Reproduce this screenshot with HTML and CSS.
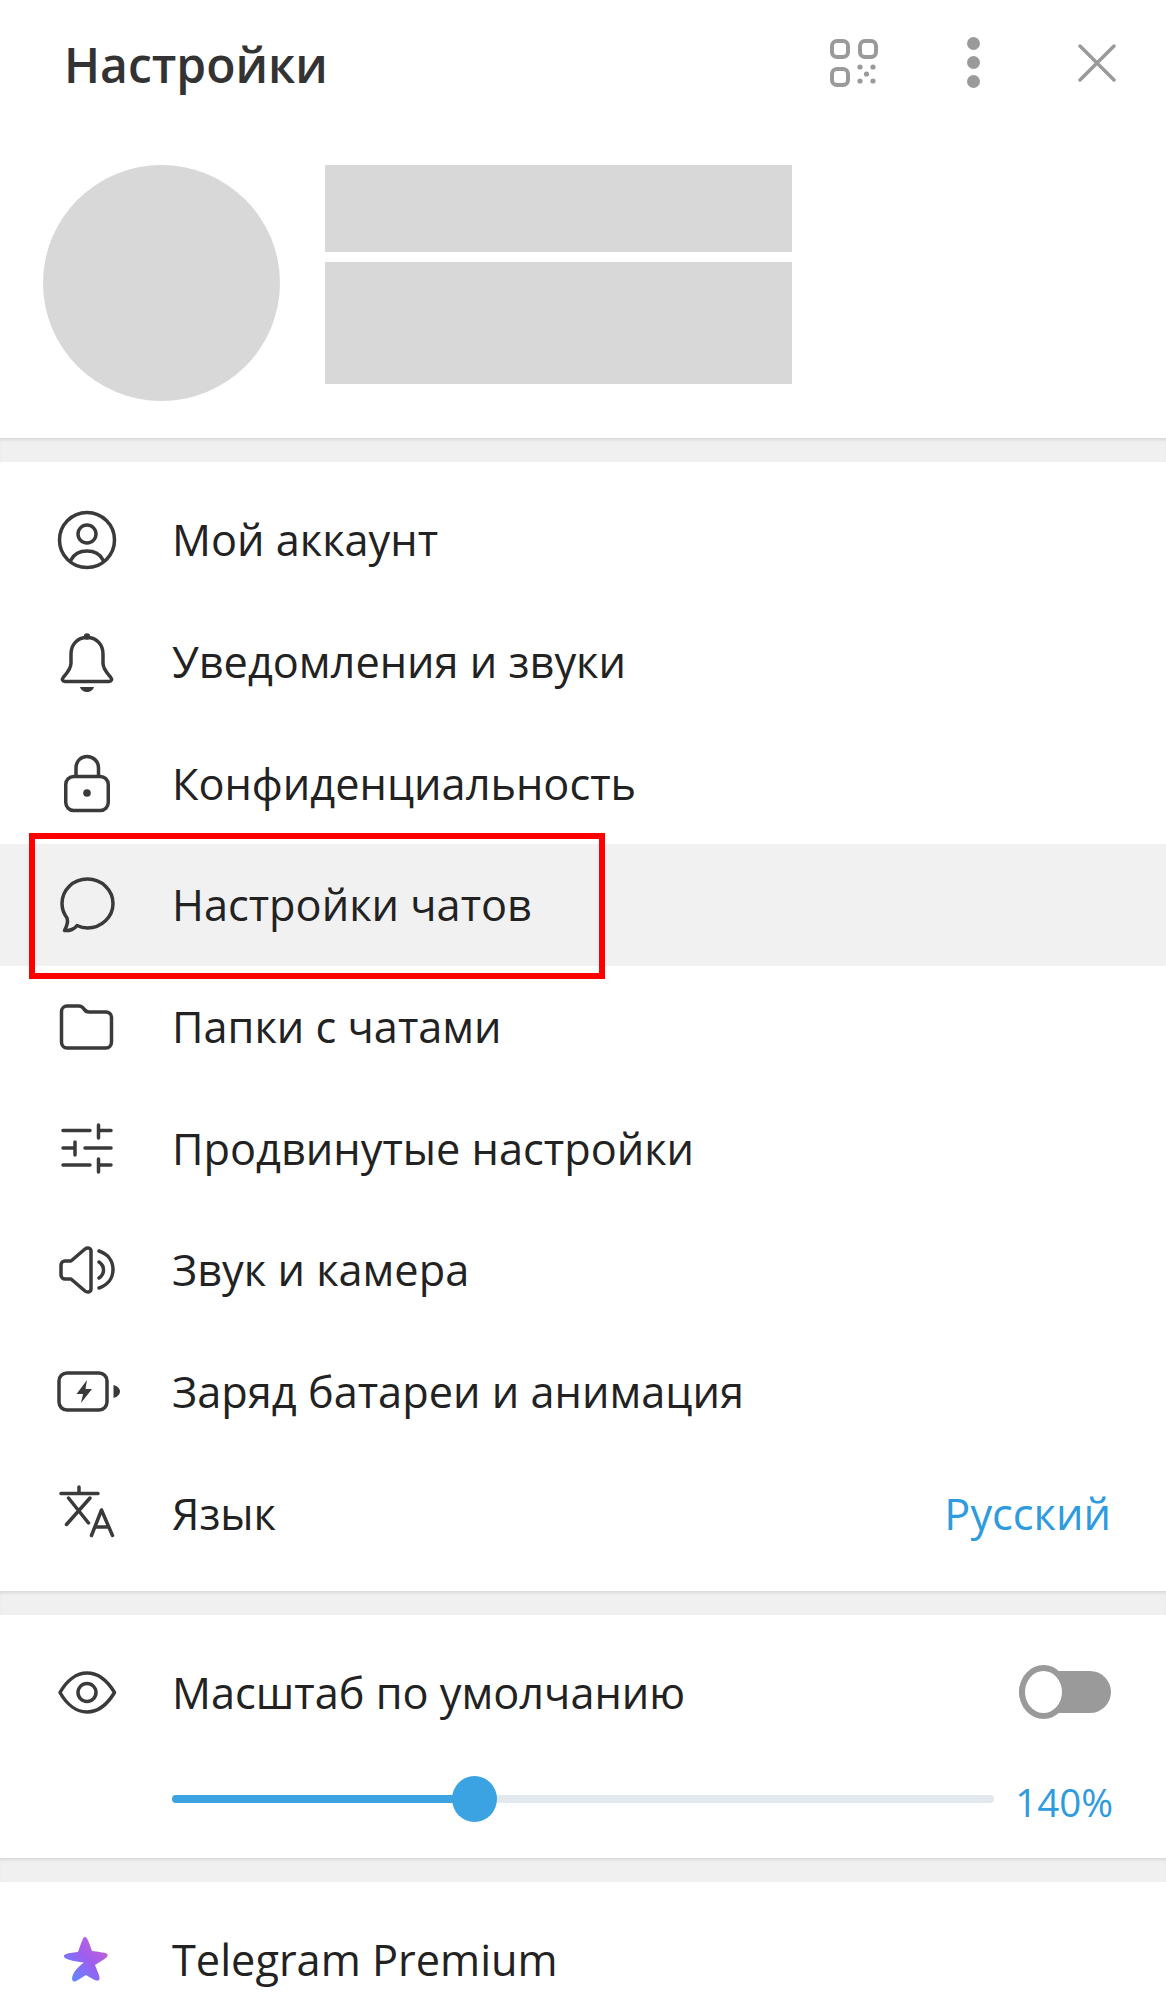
FILE: index.html
```html
<!DOCTYPE html>
<html lang="ru">
<head>
    <meta charset="UTF-8">
    <title>Настройки</title>
    <link rel="stylesheet" href="styles.css">
</head>
<body>
    <div class="settings">
        <header class="top-bar">
            <h1 class="title">Настройки</h1>
            <div class="top-actions">
                <svg class="qr-icon" viewBox="0 0 48 48">
                    <rect x="2" y="2" width="16" height="16" rx="5"/>
                    <rect x="30" y="2" width="16" height="16" rx="5"/>
                    <rect x="2" y="30" width="16" height="16" rx="5"/>
                    <circle class="dot" cx="30" cy="28" r="2.6"/>
                    <circle class="dot" cx="43" cy="28" r="2.6"/>
                    <circle class="dot" cx="36.5" cy="35" r="2.6"/>
                    <circle class="dot" cx="30" cy="42" r="2.6"/>
                    <circle class="dot" cx="43" cy="42" r="2.6"/>
                </svg>
                <div class="more-icon"><span></span><span></span><span></span></div>
                <svg class="close-icon" viewBox="0 0 38 38"><path d="M2 2 36 36M36 2 2 36"/></svg>
            </div>
        </header>
        <div class="profile">
            <div class="avatar"></div>
            <div class="profile-text">
                <div class="name-block"></div>
                <div class="phone-block"></div>
            </div>
        </div>
        <div class="divider"></div>

        <div class="menu">
            <div class="row">
                <svg class="icon" viewBox="0 0 60 60">
                    <circle cx="30" cy="30" r="27.5"/>
                    <circle cx="30" cy="24" r="9"/>
                    <path d="M14 50C17 44 23 41 30 41S43 44 46 50"/>
                </svg>
                <span class="label">Мой аккаунт</span>
            </div>
            <div class="row">
                <svg class="icon" viewBox="0 0 60 60">
                    <path d="M30 5.5C20 5.5 14 13 14 22V31C14 37 10 41 6.5 45C4.5 47.5 5.5 49.5 8 49.5H52C54.5 49.5 55.5 47.5 53.5 45C50 41 46 37 46 31V22C46 13 40 5.5 30 5.5Z"/>
                    <circle class="solid" cx="30" cy="4.5" r="3.2"/>
                    <path class="solid" d="M23 55H37C36 58.5 33 60 30 60S24 58.5 23 55Z"/>
                </svg>
                <span class="label">Уведомления и звуки</span>
            </div>
            <div class="row">
                <svg class="icon" viewBox="0 0 60 60">
                    <rect x="8.75" y="23.5" width="42.5" height="34" rx="8"/>
                    <path d="M19 23V15C19 8 24 3.5 30 3.5S41.5 8 41.5 15V23"/>
                    <circle class="solid" cx="30" cy="40" r="3.8"/>
                </svg>
                <span class="label">Конфиденциальность</span>
            </div>
            <div class="row row-active">
                <svg class="icon" viewBox="0 0 60 60">
                    <path d="M30.5 4C16 4 5 15 5 28.5C5 34 7 39 10 43C11 46 10 51 7.5 55.5C12.5 56 18 54 20 50.5C23 52 26.5 53 30.5 53C44.5 53 56 42 56 28.5S44.5 4 30.5 4Z"/>
                </svg>
                <span class="label">Настройки чатов</span>
                <div class="red-mark"></div>
            </div>
            <div class="row">
                <svg class="icon" viewBox="0 0 60 60">
                    <path d="M10 9H22C24 9 25.5 10 27 12C28.5 14.5 30 15 32 15H49C52 15 54.5 17.5 54.5 20V45C54.5 48.5 52 51 49 51H10C7 51 4.5 48.5 4.5 45V14.5C4.5 11.5 7 9 10 9Z"/>
                </svg>
                <span class="label">Папки с чатами</span>
            </div>
            <div class="row">
                <svg class="icon" viewBox="0 0 60 60">
                    <path d="M6 12.5H33M41.5 7V20M41.5 12.5H54M6 30H18M18 24V37M28 30H54M6 47H33M41.5 41V54M41.5 47H54"/>
                </svg>
                <span class="label">Продвинутые настройки</span>
            </div>
            <div class="row">
                <svg class="icon" viewBox="0 0 60 60">
                    <path d="M4 25C4 22.5 6 21 8 21H14L28 9C30.5 7 34 8 34 11V49C34 52 30.5 53 28 51L14 39H8C6 39 4 37.5 4 35Z"/>
                    <path d="M42 11C51 14 56 21 56 29.5C56 38 51 45 42 48M42 22C45 24 46.5 27 46.5 30S45 36 42 38"/>
                </svg>
                <span class="label">Звук и камера</span>
            </div>
            <div class="row">
                <svg class="icon" viewBox="0 0 60 60">
                    <rect x="2" y="11" width="48" height="37" rx="8"/>
                    <path class="solid" d="M30 18 19.5 32H26L24 41 35 27H28.5Z"/>
                    <path class="solid" d="M56.5 23C60.5 24 63 27 63 29.5S60.5 35 56.5 36Z"/>
                </svg>
                <span class="label">Заряд батареи и анимация</span>
            </div>
            <div class="row">
                <svg class="icon" viewBox="0 0 60 60">
                    <path d="M4 10.5H41M22 4V10.5M11.5 15 31.5 40M33 15 9.5 41.5M34.5 52.5 44.5 27 55.5 52.5M38 44H52"/>
                </svg>
                <span class="label">Язык</span>
                <span class="value">Русский</span>
            </div>
        </div>
        <div class="divider"></div>

        <div class="scale">
            <div class="scale-row">
                <svg class="icon" viewBox="0 0 60 60">
                    <path d="M3 30.5C10 18 20 11 30 11S50 18 57.5 30.5C50 43 40 50 30 50S10 43 3 30.5Z"/>
                    <circle cx="30" cy="30.5" r="9"/>
                </svg>
                <span class="label">Масштаб по умолчанию</span>
                <div class="toggle"><div class="toggle-knob"></div></div>
            </div>
            <div class="slider-row">
                <div class="slider">
                    <div class="slider-fill" style="width: 37%"></div>
                    <div class="slider-thumb"></div>
                </div>
                <span class="slider-value">140%</span>
            </div>
        </div>
        <div class="divider"></div>

        <div class="premium">
            <div class="row">
                <svg class="icon" viewBox="0 0 60 60">
                    <defs>
                        <linearGradient id="star-grad" x1="0.1" y1="0.95" x2="0.85" y2="0.15">
                            <stop offset="0" stop-color="#5a8dff"/>
                            <stop offset="0.55" stop-color="#9a5ff0"/>
                            <stop offset="1" stop-color="#c45fd8"/>
                        </linearGradient>
                    </defs>
                    <path class="star" d="M28 8C29.5 8 31 10 35 22C40 23 48 23 50 25C52 27 50 29 38 36C41 44 44 49 42 51C40 53 36 50 29 46C22 50 18 54 16 52C14 50 15 42 27 33.5C20 33 10 31 7.5 28.5C5.5 26 8 24 21 23C25 12 26 8 28 8Z"/>
                </svg>
                <span class="label">Telegram Premium</span>
            </div>
        </div>
    </div>
</body>
</html>
```

FILE: styles.css
```css
html, body {
    margin: 0;
    padding: 0;
    background: white;
}
.settings {
    width: 1166px;
    height: 1999px;
    overflow: hidden;
    font-family: "Open Sans", sans-serif;
    color: #222;
}

/* top */
.top-bar {
    display: flex;
    align-items: center;
    justify-content: space-between;
    height: 128px;
    padding: 0 50px 0 64px;
}
.title {
    margin: 0;
    font-size: 48px;
    font-weight: 600;
    color: #333;
}
.top-actions {
    display: flex;
    align-items: center;
    padding-bottom: 3px;
}
.qr-icon {
    width: 48px;
    height: 48px;
    fill: none;
    stroke: #9a9a9a;
    stroke-width: 4;
}
.qr-icon .dot {
    fill: #9a9a9a;
    stroke: none;
}
.more-icon {
    display: flex;
    flex-direction: column;
    gap: 6px;
    margin: 0 98px 0 89px;
}
.more-icon span {
    width: 13px;
    height: 13px;
    border-radius: 50%;
    background: #9a9a9a;
}
.close-icon {
    width: 38px;
    height: 38px;
    fill: none;
    stroke: #9a9a9a;
    stroke-width: 3.5;
    stroke-linecap: round;
}

.profile {
    display: flex;
    gap: 45px;
    padding: 37px 0 37px 43px;
}
.avatar {
    width: 237px;
    height: 236px;
    border-radius: 50%;
    background: #d8d8d8;
}
.profile-text {
    display: flex;
    flex-direction: column;
    gap: 10px;
    width: 467px;
}
.name-block { height: 87px; background: #d8d8d8; }
.phone-block { height: 122px; background: #d8d8d8; }

.divider {
    height: 24px;
    background: #f0f0f0;
    box-shadow: inset 0 3px 3px -1px rgba(0, 0, 0, 0.1);
}

/* rows */
.menu {
    padding: 17px 0;
}
.row {
    display: flex;
    align-items: center;
    height: 121.7px;
    padding: 0 55px 0 57px;
    position: relative;
}
.row-active {
    background: #f1f1f1;
}
.red-mark {
    position: absolute;
    left: 29px;
    top: -11px;
    width: 576px;
    height: 146px;
    box-sizing: border-box;
    border: 6px solid #f00;
}
.icon {
    flex-shrink: 0;
    width: 60px;
    height: 60px;
    fill: none;
    stroke: #3a3a3a;
    stroke-width: 3.5;
    stroke-linecap: round;
    stroke-linejoin: round;
    overflow: visible;
}
.icon .solid {
    fill: #3a3a3a;
    stroke: none;
}
.icon .star {
    fill: url(#star-grad);
    stroke: none;
}
.label {
    margin-left: 55px;
    font-size: 43.3px;
}
.value {
    margin-left: auto;
    font-size: 43.3px;
    color: #2e9bde;
}

/* scale block */
.scale-row {
    display: flex;
    align-items: center;
    height: 154px;
    padding: 0 55px 0 57px;
}
.toggle {
    position: relative;
    width: 92px;
    height: 42px;
    margin-left: auto;
    border-radius: 21px;
    background: #9a9a9a;
}
.toggle-knob {
    position: absolute;
    left: 0;
    top: -6px;
    width: 49px;
    height: 54px;
    box-sizing: border-box;
    border: 6px solid #9a9a9a;
    border-radius: 50%;
    background: white;
}
.slider-row {
    display: flex;
    align-items: center;
    justify-content: space-between;
    height: 60px;
    padding: 0 53px 29px 172px;
}
.slider {
    position: relative;
    width: 822px;
    height: 8px;
    border-radius: 4px;
    background: #e1e9ee;
}
.slider-fill {
    height: 100%;
    border-radius: 4px;
    background: #3ba3e2;
}
.slider-thumb {
    position: absolute;
    left: 280px;
    top: -19px;
    width: 45px;
    height: 46px;
    border-radius: 50%;
    background: #3ba3e2;
}
.slider-value {
    margin-top: 6px;
    font-size: 38.5px;
    color: #2e9bde;
}

.premium {
    padding-top: 16px;
}
```
